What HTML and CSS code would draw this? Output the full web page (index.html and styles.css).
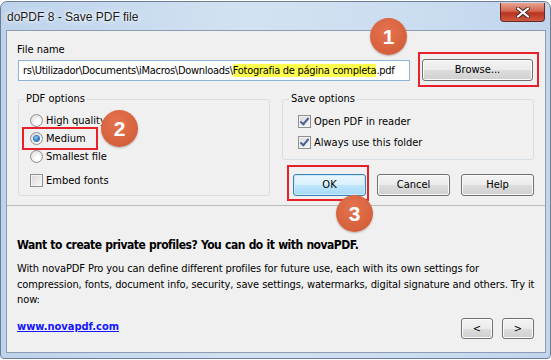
FILE: index.html
```
<!DOCTYPE html>
<html lang="en">
<head>
    <meta charset="UTF-8">
    <title>doPDF 8 - Save PDF file</title>
    <link rel="stylesheet" href="styles.css">
</head>
<body>
    <div class="window">
        <div class="titlebar">
            <span class="title">doPDF 8 - Save PDF file</span>
            <div class="close-btn">
                <svg width="14" height="11" viewBox="0 0 14 11">
                    <path d="M2 1.5 L12 9.5 M12 1.5 L2 9.5" stroke="#4b2a2a" stroke-width="4" stroke-linecap="round"/>
                    <path d="M2 1.5 L12 9.5 M12 1.5 L2 9.5" stroke="#ffffff" stroke-width="2.2" stroke-linecap="round"/>
                </svg>
            </div>
        </div>

        <div class="client">
            <div class="top">
                <div class="file-label">File name</div>
                <div class="file-row">
                    <div class="file-input">rs\Utilizador\Documents\iMacros\Downloads\<span class="hl-text">Fotografia de página completa</span>.pdf</div>
                    <div class="btn browse marked">Browse...</div>
                </div>

                <div class="options-row">
                    <fieldset class="group pdf-options">
                        <legend>PDF options</legend>
                        <label class="opt"><span class="radio"></span>High quality</label>
                        <label class="opt marked"><span class="radio checked"></span>Medium</label>
                        <label class="opt"><span class="radio"></span>Smallest file</label>
                        <label class="opt embed"><span class="check"></span>Embed fonts</label>
                    </fieldset>

                    <div class="right-col">
                        <fieldset class="group save-options">
                            <legend>Save options</legend>
                            <label class="opt tall"><span class="check checked"></span>Open PDF in reader</label>
                            <label class="opt tall"><span class="check checked"></span>Always use this folder</label>
                        </fieldset>
                        <div class="buttons">
                            <div class="btn default marked">OK</div>
                            <div class="btn">Cancel</div>
                            <div class="btn">Help</div>
                        </div>
                    </div>
                </div>
            </div>

            <div class="promo">
                <h2>Want to create private profiles? You can do it with novaPDF.</h2>
                <p>With novaPDF Pro you can define different profiles for future use, each with its own settings for<br>
                    compression, fonts, document info, security, save settings, watermarks, digital signature and others. Try it<br>
                    now:</p>
                <div class="promo-footer">
                    <a href="#">www.novapdf.com</a>
                    <div class="nav">
                        <div class="btn small">&lt;</div>
                        <div class="btn small">&gt;</div>
                    </div>
                </div>
            </div>
        </div>

        <span class="step step-1">1</span>
        <span class="step step-2">2</span>
        <span class="step step-3">3</span>
    </div>
</body>
</html>
```

FILE: styles.css
```
body {
    margin: 0;
    background-color: #ffffff;
    font-family: 'DejaVu Sans Condensed', 'Liberation Sans', sans-serif;
    font-size: 11px;
    color: #000000;
}

.window {
    position: relative;
    box-sizing: border-box;
    width: 551px;
    height: 358px;
    margin-top: 1px;
    padding: 0 4px 5px 5px;
    border: 1px solid #6d7f92;
    border-radius: 7px 7px 4px 4px;
    background: linear-gradient(to right, #bdd3eb, #d3e2f2 45%, #cbddf0 75%, #c0d5ec);
    display: flex;
    flex-direction: column;
}

.titlebar {
    height: 28px;
    display: flex;
    align-items: flex-start;
    justify-content: space-between;
}

.title {
    margin: 8px 0 0 1px;
    font-family: 'Liberation Sans', sans-serif;
    font-size: 12px;
    color: #1a1a1a;
    text-shadow: 0 0 6px #ffffff, 0 0 3px #ffffff;
}

.close-btn {
    width: 45px;
    height: 19px;
    margin: 1px 1px 0 0;
    box-sizing: border-box;
    border: 1px solid #6b2b25;
    border-top: none;
    border-radius: 0 0 4px 4px;
    background: linear-gradient(#e7a291, #d2674f 45%, #b8331f 55%, #cf5a40);
    display: flex;
    align-items: center;
    justify-content: center;
}

.client {
    flex: 1;
    border: 1px solid #8d9db1;
    background-color: #f0f0f0;
    display: flex;
    flex-direction: column;
}

.top {
    padding: 12px 11px 9px 11px;
}

.file-label {
    line-height: 14px;
    margin-left: -1px;
}

.file-row {
    display: flex;
    align-items: center;
    gap: 12px;
    margin-top: 2px;
}

.file-input {
    box-sizing: border-box;
    width: 392px;
    height: 21px;
    line-height: 19px;
    padding-left: 4px;
    border: 1px solid #8fb3d9;
    background-color: #ffffff;
    letter-spacing: -0.28px;
    white-space: nowrap;
    overflow: hidden;
}

.hl-text {
    background-color: #ffff4d;
}

.btn {
    position: relative;
    box-sizing: border-box;
    width: 73px;
    height: 22px;
    line-height: 20px;
    text-align: center;
    border: 1px solid #707070;
    border-radius: 3px;
    background: linear-gradient(#f3f3f3, #ebebeb 50%, #dddddd 50%, #cfcfcf);
    box-shadow: inset 0 0 0 1px #fbfbfb;
}

.btn.browse {
    width: 111px;
}

.btn.default {
    border-color: #3c7fb1;
    background: linear-gradient(#eaf6fd, #d9f0fc 50%, #bee6fd 50%, #a7d9f5);
    box-shadow: inset 0 0 0 1px #c7ecff;
}

.marked::after {
    content: '';
    position: absolute;
    border: 2px solid #e8202a;
}

.browse.marked::after {
    inset: -8px -7px -7px -5px;
}

.btn.default.marked::after {
    inset: -10px -4px -6px -7px;
}

.options-row {
    display: flex;
    gap: 12px;
    margin-top: 11px;
}

.group {
    box-sizing: border-box;
    width: 252px;
    margin: 0;
    padding: 5px 0 2px 11px;
    border: 1px solid #d5dfe5;
    border-radius: 3px;
}

.group legend {
    margin-left: -6px;
    padding: 0 2px;
    line-height: 14px;
}

.save-options {
    padding: 5px 0 6px 15px;
}

.save-options legend {
    margin-left: -9px;
}

.opt {
    position: relative;
    display: flex;
    align-items: center;
    height: 18px;
    width: max-content;
}

.opt.embed {
    margin-top: 6px;
}

.opt.tall {
    height: 20px;
    margin-bottom: 1px;
}

.opt.marked::after {
    inset: -2px -12px -3px -8px;
}

.radio {
    box-sizing: border-box;
    width: 13px;
    height: 13px;
    margin-right: 3px;
    border: 1px solid #8e8f8f;
    border-radius: 50%;
    background: radial-gradient(circle at 60% 65%, #ffffff 20%, #dcdcdc 80%);
    display: flex;
    align-items: center;
    justify-content: center;
}

.radio.checked::before {
    content: '';
    width: 5px;
    height: 5px;
    border-radius: 50%;
    background: radial-gradient(circle at 40% 35%, #8fd3ff, #1a66b0 70%, #0d3d73);
    box-shadow: 0 0 0 1px #3a7bc0;
}

.check {
    box-sizing: border-box;
    width: 13px;
    height: 13px;
    margin-right: 3px;
    border: 1px solid #8e8f8f;
    background: linear-gradient(135deg, #d8d8d8, #f7f7f7);
    box-shadow: inset 0 0 0 1px #f4f4f4;
    display: flex;
    align-items: center;
    justify-content: center;
}

.check.checked::before {
    content: '';
    width: 3px;
    height: 7px;
    margin-top: -2px;
    border: solid #4a5f97;
    border-width: 0 2px 2px 0;
    transform: rotate(40deg);
}

.right-col {
    display: flex;
    flex-direction: column;
}

.buttons {
    display: flex;
    justify-content: flex-end;
    gap: 11px;
    margin-top: 14px;
}

.promo {
    flex: 1;
    border-top: 1px solid #b9b9b9;
    padding: 31px 11px 0 10px;
    display: flex;
    flex-direction: column;
}

.promo h2 {
    margin: 0;
    font-size: 12px;
    line-height: 16px;
    font-weight: bold;
    letter-spacing: -0.5px;
    word-spacing: 0.5px;
}

.promo p {
    margin: 8px 0 0 0;
    line-height: 15.5px;
    letter-spacing: -0.1px;
    white-space: nowrap;
}

.promo-footer {
    display: flex;
    justify-content: space-between;
    align-items: center;
    margin-top: 7px;
}

.promo-footer a {
    color: #1515ff;
    font-weight: bold;
    text-decoration: underline;
}

.nav {
    display: flex;
    gap: 9px;
    margin-top: 3px;
}

.btn.small {
    width: 32px;
    height: 21px;
    line-height: 19px;
}

.step {
    position: absolute;
    width: 37px;
    height: 37px;
    border-radius: 50%;
    background: radial-gradient(circle at 45% 35%, #e5734f, #d5603c 70%, #c65534);
    box-shadow: 0 1px 2px rgba(0, 0, 0, 0.25);
    color: #ffffff;
    font-family: 'Liberation Sans', sans-serif;
    font-size: 21px;
    font-weight: bold;
    line-height: 37px;
    text-align: center;
}

.step-1 {
    left: 369px;
    top: 16px;
}

.step-2 {
    left: 100px;
    top: 108px;
}

.step-3 {
    left: 335px;
    top: 193px;
}
```
